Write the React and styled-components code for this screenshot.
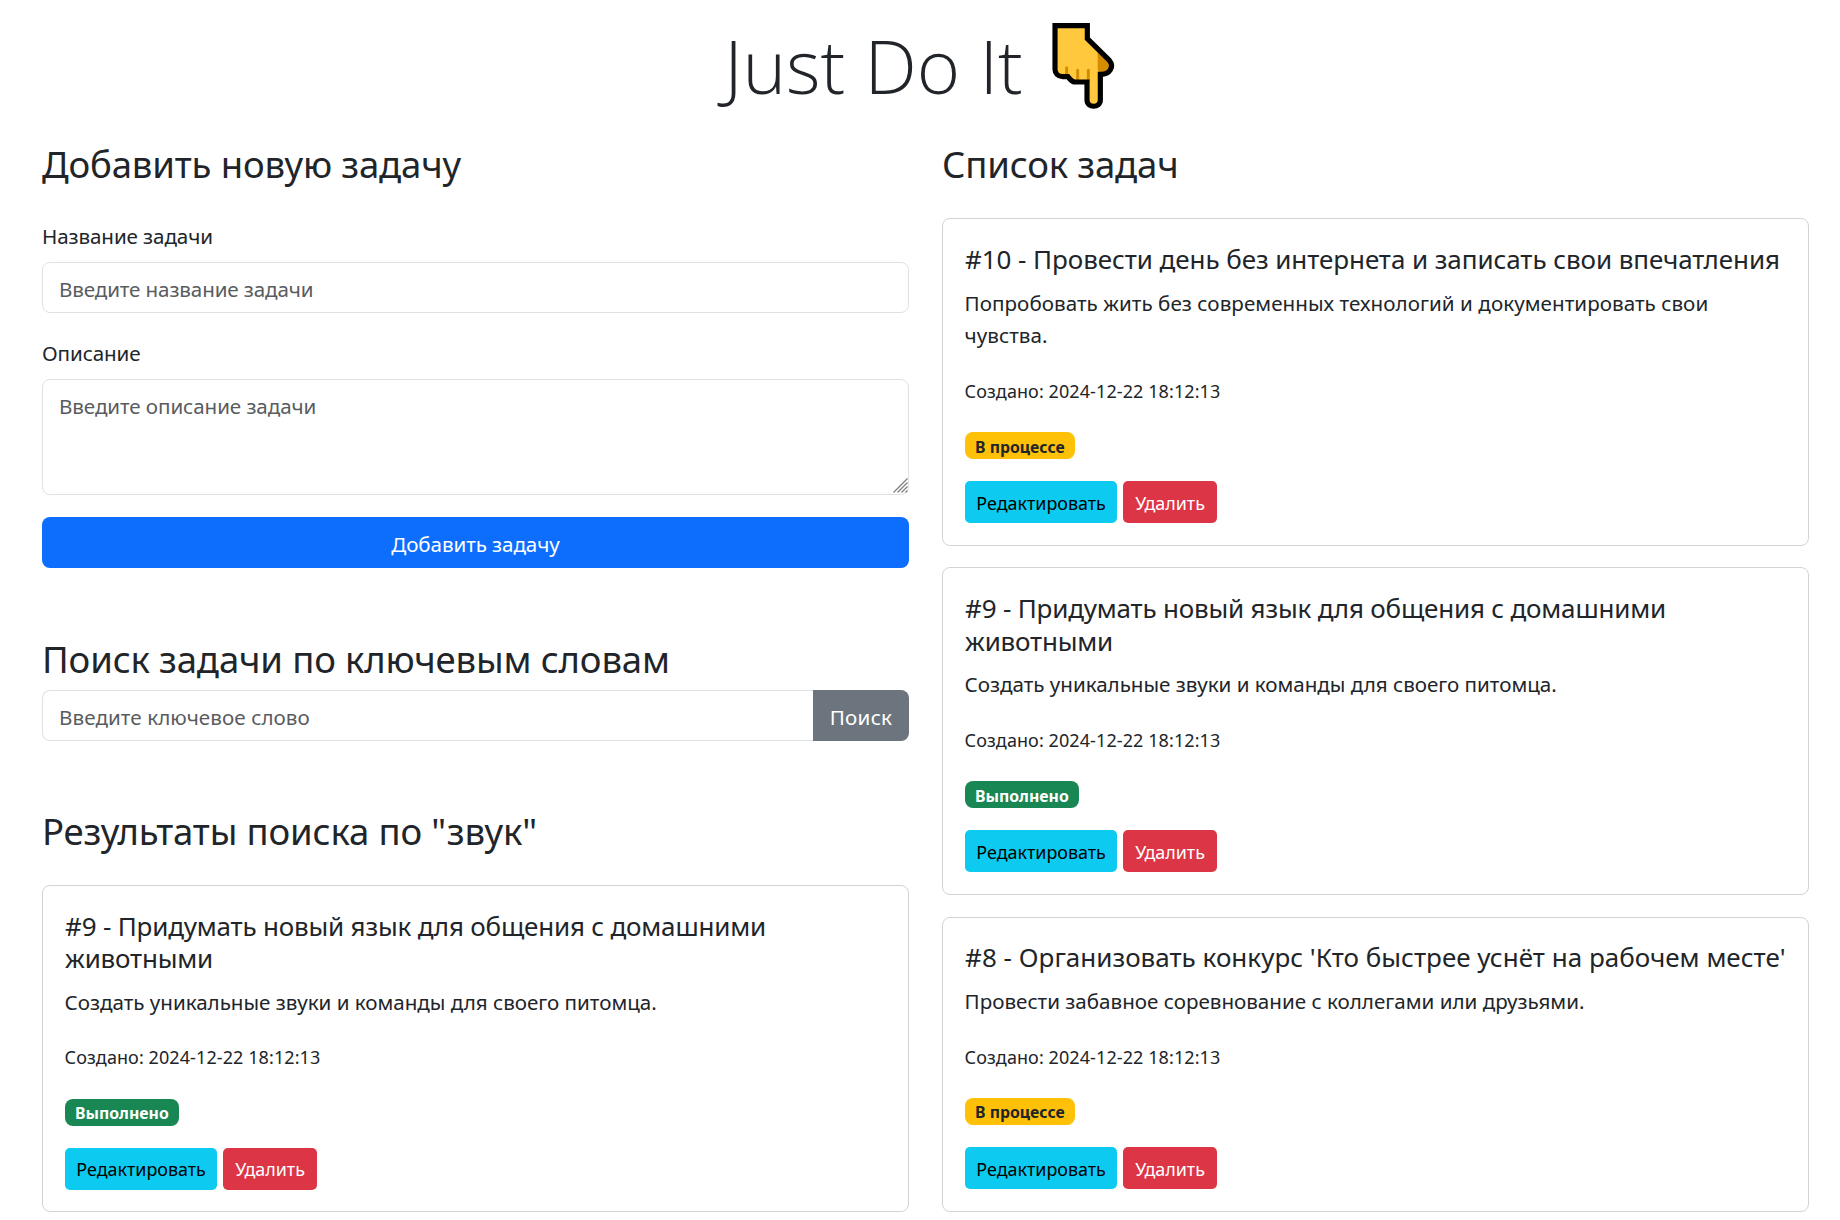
import React from "react";
import styled, { createGlobalStyle } from "styled-components";

const GlobalStyle = createGlobalStyle`
  *, *::before, *::after { box-sizing: border-box; }
  body {
    margin: 0;
    background: #fff;
    color: #212529;
    font-family: "Noto Sans", "Open Sans", sans-serif;
    font-size: 20.6px;
    line-height: 32.4px;
  }
  h1, h2, h3, p, form { margin: 0; font-weight: 400; }
  input, textarea, button { font: inherit; margin: 0; }
`;

const Page = styled.main`
  height: 1220px;
  overflow: hidden;
  padding: 16px 31px 0 42px;
`;

const Header = styled.header`
  display: flex;
  justify-content: center;
  height: 90.6px;
  margin-bottom: 34px;
  padding-right: 7px;
`;

const Title = styled.h1`
  padding-top: 5px;
  font-family: "Open Sans", "Noto Sans", sans-serif;
  font-size: 74px;
  font-weight: 300;
  line-height: 90.6px;
  white-space: nowrap;
`;

const Hand = styled.svg`
  width: 74px;
  height: 96px;
  margin: 2px 0 0 23px;
`;

const Columns = styled.div`
  display: grid;
  grid-template-columns: 1fr 1fr;
  column-gap: 33px;
`;

const Column = styled.section`
  min-width: 0;
`;

const Heading = styled.h2`
  height: 45.4px;
  padding-top: ${(p) => p.$drop ?? 1.5}px;
  margin-bottom: ${(p) => p.$gap}px;
  font-size: 36.5px;
  line-height: 45.4px;
  letter-spacing: -0.15px;
  white-space: nowrap;
`;

const Label = styled.label`
  display: block;
  height: 32.4px;
  padding-top: ${(p) => p.$drop ?? 0.6}px;
  margin-bottom: 10.8px;
  letter-spacing: -0.1px;
`;

const Field = styled.div`
  position: relative;
  display: flex;
  margin-bottom: 22px;
`;

const Input = styled.input`
  width: 100%;
  min-width: 0;
  height: 51.3px;
  padding: 2px 16px 0;
  border: 1px solid #dee2e6;
  border-radius: ${(p) => (p.$grouped ? "8px 0 0 8px" : "8px")};
  border-right-width: ${(p) => (p.$grouped ? 0 : 1)}px;
  color: #212529;
  background: #fff;
  outline: 0;
  &::placeholder {
    color: #595c5f;
    opacity: 1;
    letter-spacing: ${(p) => (p.$grouped ? 0.08 : -0.12)}px;
  }
`;

const TextArea = styled.textarea`
  display: block;
  width: 100%;
  height: 116px;
  padding: 10px 16px 8px;
  border: 1px solid #dee2e6;
  border-radius: 8px;
  color: #212529;
  background: #fff;
  resize: none;
  outline: 0;
  &::placeholder { color: #595c5f; opacity: 1; letter-spacing: -0.08px; }
`;

const Grip = styled.svg`
  position: absolute;
  right: 1.5px;
  bottom: 2px;
  width: 15px;
  height: 15px;
`;

const SubmitButton = styled.button`
  display: block;
  width: 100%;
  height: 51.3px;
  padding: 3px 16px 0;
  border: 0;
  border-radius: 8px;
  color: #fff;
  background: #0d6efd;
  letter-spacing: -0.08px;
`;

const SearchButton = styled.button`
  flex: 0 0 96px;
  height: 51.3px;
  padding: 3px 0 0;
  border: 0;
  border-radius: 0 8px 8px 0;
  color: #fff;
  background: #6c757d;
  letter-spacing: 0.3px;
`;

const SearchBlock = styled.div`
  margin-top: 66px;
`;

const SearchGroup = styled.form`
  display: flex;
  margin-bottom: 65.4px;
`;

const CardList = styled.div`
  display: grid;
  row-gap: 21.6px;
`;

const Card = styled.article`
  padding: 23.7px 21.6px 21.8px;
  border: 1px solid #d3d3d4;
  border-radius: 8px;
  background: #fff;
`;

const CardTitle = styled.h3`
  margin: 0 -4px 11.4px 0;
  padding-left: 0.5px;
  font-size: 26px;
  line-height: 32.4px;
  letter-spacing: ${(p) => p.$tracking}px;
`;

const CardText = styled.p`
  margin-bottom: 23.2px;
  letter-spacing: ${(p) => p.$tracking}px;
`;

const CreatedAt = styled.p`
  margin-bottom: 24.8px;
  font-size: 18px;
  letter-spacing: 0.09px;
`;

const Badge = styled.span`
  display: block;
  width: fit-content;
  height: 27.3px;
  padding: 1.6px 10.5px 0;
  margin-bottom: 21.7px;
  border-radius: 8px;
  color: ${(p) => (p.$done ? "#fff" : "#212529")};
  background: ${(p) => (p.$done ? "#198754" : "#ffc107")};
  font-size: 15.8px;
  font-weight: 700;
  line-height: 27.3px;
`;

const Actions = styled.div`
  display: flex;
  gap: 6px;
`;

const ActionButton = styled.button`
  width: ${(p) => (p.$danger ? 94 : 152)}px;
  height: 42px;
  padding: 2px 0 0 1px;
  border: 0;
  border-radius: 5px;
  color: ${(p) => (p.$danger ? "#fff" : "#000")};
  background: ${(p) => (p.$danger ? "#dc3545" : "#0dcaf0")};
  font-size: 17.9px;
`;

const tasks = [
  {
    id: 10,
    title: "Провести день без интернета и записать свои впечатления",
    text: "Попробовать жить без современных технологий и документировать свои чувства.",
    done: false,
    tracking: -0.07,
    textTracking: 0.05,
  },
  {
    id: 9,
    title: "Придумать новый язык для общения с домашними животными",
    text: "Создать уникальные звуки и команды для своего питомца.",
    done: true,
    tracking: -0.19,
    textTracking: -0.02,
  },
  {
    id: 8,
    title: "Организовать конкурс 'Кто быстрее уснёт на рабочем месте'",
    text: "Провести забавное соревнование с коллегами или друзьями.",
    done: false,
    tracking: 0.02,
    textTracking: 0,
  },
];

function TaskCard({ task }) {
  return (
    <Card>
      <CardTitle $tracking={task.tracking}>{`#${task.id} - ${task.title}`}</CardTitle>
      <CardText $tracking={task.textTracking}>{task.text}</CardText>
      <CreatedAt>Создано: 2024-12-22 18:12:13</CreatedAt>
      <Badge $done={task.done}>{task.done ? "Выполнено" : "В процессе"}</Badge>
      <Actions>
        <ActionButton>Редактировать</ActionButton>
        <ActionButton $danger>Удалить</ActionButton>
      </Actions>
    </Card>
  );
}

function PointingHand() {
  return (
    <Hand viewBox="0 0 222 288" aria-hidden="true">
      <path
        d="M27 23H124V62L190 127C206 146 191 170 163 169V246C163 271 123 271 123 246V192H88C76 192 73 184 66 176H50C36 176 27 166 27 154Z"
        fill="#ffc83d"
      />
      <path d="M155 96L192 126C206 146 191 170 163 169L155 154Z" fill="#d48c00" />
      <path
        d="M62 149V178M95 157V188M127 157V188"
        fill="none"
        stroke="#d48c00"
        strokeWidth="9"
        strokeLinecap="round"
      />
      <path
        d="M27 23H124V62L190 127C206 146 191 170 163 169V246C163 271 123 271 123 246V192H88C76 192 73 184 66 176H50C36 176 27 166 27 154Z"
        fill="none"
        stroke="#000"
        strokeWidth="15.5"
      />
    </Hand>
  );
}

export default function App() {
  return (
    <>
      <GlobalStyle />
      <Page>
        <Header>
          <Title>Just Do It</Title>
          <PointingHand />
        </Header>
        <Columns>
          <Column>
            <Heading $gap={33}>Добавить новую задачу</Heading>
            <form onSubmit={(e) => e.preventDefault()}>
              <Label htmlFor="title">Название задачи</Label>
              <Field>
                <Input id="title" placeholder="Введите название задачи" />
              </Field>
              <Label htmlFor="text" $drop={1.4}>Описание</Label>
              <Field>
                <TextArea id="text" placeholder="Введите описание задачи" />
                <Grip viewBox="0 0 15 15" aria-hidden="true">
                  <path
                    d="M0.5 14.5L14.5 0.5M4.5 14.5L14.5 4.5M8.5 14.5L14.5 8.5M12.5 14.5L14.5 12.5"
                    stroke="#7d7d7d"
                    strokeWidth="1.2"
                  />
                </Grip>
              </Field>
              <SubmitButton>Добавить задачу</SubmitButton>
            </form>
            <SearchBlock>
              <Heading $gap={10.8} $drop={2.6}>Поиск задачи по ключевым словам</Heading>
              <SearchGroup onSubmit={(e) => e.preventDefault()}>
                <Input $grouped placeholder="Введите ключевое слово" />
                <SearchButton>Поиск</SearchButton>
              </SearchGroup>
              <Heading $gap={32.7} $drop={2.6}>Результаты поиска по "звук"</Heading>
              <TaskCard task={tasks[1]} />
            </SearchBlock>
          </Column>
          <Column>
            <Heading $gap={32.4}>Список задач</Heading>
            <CardList>
              {tasks.map((task) => (
                <TaskCard key={task.id} task={task} />
              ))}
            </CardList>
          </Column>
        </Columns>
      </Page>
    </>
  );
}
